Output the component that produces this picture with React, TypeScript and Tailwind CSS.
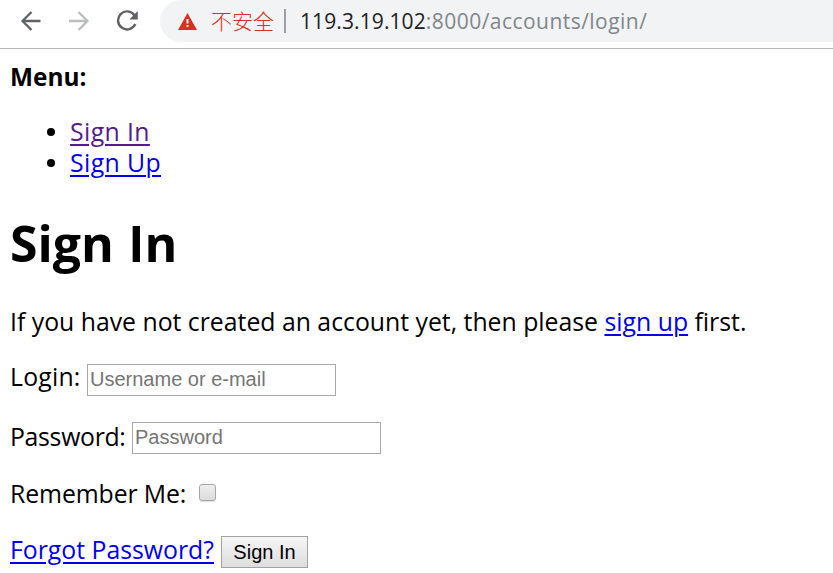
import type { ReactNode } from 'react';

function Link({ children, className = 'text-[#0000ee]' }: { children: ReactNode; className?: string }) {
  return (
    <a href="#" className={`underline decoration-2 underline-offset-[3px] ${className}`}>
      {children}
    </a>
  );
}

function Toolbar() {
  return (
    <header className="flex h-[49px] items-start border-b border-[#b4b5b7] bg-white">
      <nav className="flex h-[42px] w-[160px] shrink-0 items-center">
        <svg className="ml-5 h-[22px] w-[22px] shrink-0" viewBox="0 0 22 22" fill="none" stroke="#5f6368" strokeWidth="2.3">
          <path d="M20.5 11H2.5M11.5 2L2.5 11l9 9" />
        </svg>
        <svg className="ml-[27px] h-[22px] w-[22px] shrink-0" viewBox="0 0 22 22" fill="none" stroke="#babcbe" strokeWidth="2.3">
          <path d="M0 11h18.5M9.500 2l9 9-9 9" />
        </svg>
        <svg className="ml-[25px] h-[22px] w-[23px] shrink-0" viewBox="0 0 23 22" fill="none">
          <path d="M18.400 5.200A9 9 0 1 0 19.300 14" stroke="#5f6368" strokeWidth="2.4" />
          <path d="M21.800 1v8.500h-8.500z" fill="#5f6368" />
        </svg>
      </nav>
      <div className="flex h-[42px] flex-1 items-center rounded-l-full bg-[#f1f3f4] font-['Open_Sans','Noto_Sans_CJK_SC',sans-serif] text-[21px] whitespace-nowrap">
        <svg className="ml-[18px] h-[17px] w-[19px] shrink-0" viewBox="0 0 19 17">
          <path d="M9.500 0L19 17H0z" fill="#d93025" />
          <path d="M8.500 6h2v4.500h-2zM8.500 12h2v2h-2z" fill="#f1f3f4" />
        </svg>
        <span className="-mt-[2px] ml-[14px] w-[63px] font-['Noto_Sans_CJK_SC',sans-serif] font-light text-[#d93025]">不安全</span>
        <span className="ml-[10px] h-6 w-[2px] bg-[#9aa0a6]" />
        <span className="ml-[14px] tracking-[0.1px] text-[#202124]">119.3.19.102</span>
        <span className="tracking-[0.46px] text-[#80868b]">:8000/accounts/login/</span>
      </div>
    </header>
  );
}

export default function App() {
  return (
    <div className="h-[573px] overflow-hidden bg-white font-['Open_Sans',sans-serif] text-[24.8px] leading-[31px] whitespace-nowrap text-black">
      <Toolbar />
      <main className="flex flex-col items-start pl-[10px]">
        <strong className="mt-3 text-[24.4px]">Menu:</strong>
        <ul className="mt-6 pl-[60px]">
          {['Sign In', 'Sign Up'].map((label) => (
            <li key={label} className="flex items-center tracking-[0.4px]">
              <span className="-ml-[23px] mr-[15px] h-2 w-2 rounded-full bg-black" />
              <Link className={label === 'Sign In' ? 'text-[#551a8b]' : 'text-[#0000ee]'}>{label}</Link>
            </li>
          ))}
        </ul>
        <h1 className="mt-8 text-[50px] leading-[66px] font-bold">
          Sign <span className="mr-[1px] ml-[2px] font-['Roboto',sans-serif]">I</span>n
        </h1>
        <p className="mt-[28px]">
          If you have not created an account yet, then please <Link>sign up</Link> first.
        </p>
        <label className="mt-6 flex h-[34px] items-center">
          <span className="-mt-[3px] w-[77px] tracking-[0.2px]">Login:</span>
          <input
            type="text"
            placeholder="Username or e-mail"
            className="mt-[3px] h-8 w-[249px] border border-[#a9a9a9] px-[2px] font-['Liberation_Sans',sans-serif] text-[20px] placeholder:text-[#757575]"
          />
        </label>
        <label className="mt-6 flex h-[34px] items-center">
          <span className="w-[122px] tracking-[-0.3px]">Password:</span>
          <input
            type="password"
            placeholder="Password"
            className="mt-[3px] h-8 w-[249px] border border-[#a9a9a9] px-[2px] font-['Liberation_Sans',sans-serif] text-[20px] placeholder:text-[#757575]"
          />
        </label>
        <label className="mt-[25px] flex h-[31px] items-center">
          <span className="w-[189px] tracking-[-0.1px]">Remember Me:</span>
          <input
            type="checkbox"
            className="-mt-[2px] h-[17px] w-[17px] appearance-none rounded-[3px] border border-[#a6a6a6] bg-linear-to-b from-[#eeeeee] to-[#dcdcdc] shadow-[0_1px_1px_#dddddd]"
          />
        </label>
        <div className="mt-[25px] flex h-[33px] items-start">
          <span className="w-[211px]">
            <Link>Forgot Password?</Link>
          </span>
          <button className="mt-[2px] h-8 w-[87px] border border-[#a2a2a2] bg-linear-to-b from-[#f6f6f6] to-[#dddddd] font-['Liberation_Sans',sans-serif] text-[20px] leading-[28px]">
            Sign In
          </button>
        </div>
      </main>
    </div>
  );
}
